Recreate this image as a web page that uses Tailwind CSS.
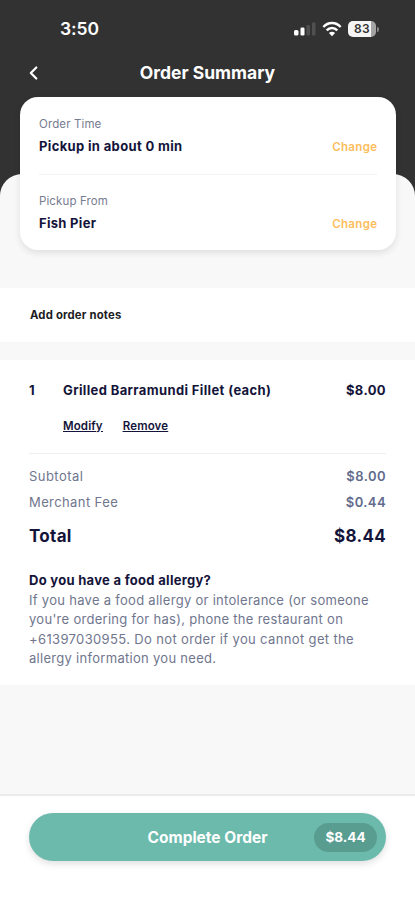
<!DOCTYPE html>
<html lang="en">
<head>
<meta charset="utf-8">
<meta name="viewport" content="width=device-width, initial-scale=1">
<title>Order Summary</title>
<script src="https://cdn.jsdelivr.net/npm/@tailwindcss/browser@4"></script>
</head>
<body class="bg-[#323232] font-['Inter',sans-serif] text-[#14143a]">
<div class="flex h-[900px] w-[415px] flex-col overflow-hidden">
  <header class="h-[174px] shrink-0 text-white">
    <div class="flex h-[58px] items-center justify-between pr-[36px] pl-[60px]">
      <span class="text-[17.500px] leading-none font-semibold tracking-[-0.1px]">3:50</span>
      <div class="flex items-center gap-[6px]">
        <svg class="h-[16px] w-[24px]" viewBox="0 0 24 16"><rect x="2" y="9" width="4.500" height="5.500" rx="1.500" fill="#fff"/><rect x="8.500" y="6.500" width="4" height="8" rx="1.300" fill="#fff"/><rect x="14.500" y="4" width="3.500" height="10.500" rx="1.300" fill="#505050"/><rect x="20" y="1.500" width="3.500" height="13" rx="1.300" fill="#505050"/></svg>
        <svg class="h-[16px] w-[20px]" viewBox="0 0 20 16" fill="none" stroke="#fff" stroke-width="2.500"><path d="M1.400 6C6 .7 14 .7 18.600 6"/><path d="M4.700 9.400C7.700 6.100 12.300 6.100 15.300 9.400"/><path d="M10 15.200 6.900 12.100Q10 9.300 13.100 12.100Z" fill="#fff" stroke="none"/></svg>
        <div class="flex items-center gap-px">
          <div class="flex h-[16px] w-[28px] items-center justify-center rounded-[5px] bg-linear-to-r from-[#f5f5f5] from-82% to-[#a3a3a3] to-82% text-[12px] leading-none font-semibold text-[#323232] tracking-[0.3px]">83</div>
          <div class="h-[5px] w-[2px] rounded-r-full bg-[#888]"></div>
        </div>
      </div>
    </div>
    <div class="grid h-[30px] grid-cols-[24px_1fr_24px] items-center px-[24px]">
      <svg class="h-[16px] w-[16px] translate-x-[2px]" viewBox="0 0 16 16" fill="none" stroke="#fff" stroke-width="2.200" stroke-linecap="round" stroke-linejoin="round"><path d="M10.300 2.500 4.800 8l5.500 5.500"/></svg>
      <h1 class="text-center text-[17.500px] leading-none font-bold">Order Summary</h1>
    </div>
  </header>

  <main class="grow rounded-t-[22px] bg-[#f8f8f8]">
    <section class="relative mx-[20px] -mt-[77px] h-[153px] w-[376px] rounded-[18px] bg-white px-[19px] shadow-[0_3px_7px_rgba(0,0,0,0.1)]">
      <div class="flex h-[77px] flex-col pt-[19px]">
        <p class="text-[11.500px] leading-[16px] tracking-[0.12px] text-[#777c92]">Order Time</p>
        <div class="mt-[4px] flex items-center justify-between leading-[20px]">
          <p class="text-[13px] font-bold tracking-[0.35px]">Pickup in about 0 min</p>
          <a class="-mr-[0.400px] translate-y-px text-[11.500px] font-semibold tracking-[0.35px] text-[#fcbd5c]">Change</a>
        </div>
      </div>
      <div class="flex flex-col border-t border-[#f2f2f2] pt-[18px]">
        <p class="text-[11.500px] leading-[16px] tracking-[0.12px] text-[#777c92]">Pickup From</p>
        <div class="mt-[4px] flex items-center justify-between leading-[20px]">
          <p class="text-[13px] font-bold tracking-[0.3px]">Fish Pier</p>
          <a class="-mr-[0.400px] translate-y-px text-[11.500px] font-semibold tracking-[0.35px] text-[#fcbd5c]">Change</a>
        </div>
      </div>
    </section>

    <section class="mt-[38px] flex h-[54px] items-center bg-white px-[30px] text-[11.300px] font-bold tracking-[0.2px] text-[#1c1c24]">Add order notes</section>

    <section class="mt-[18px] h-[325px] bg-white px-[29px] pt-[20px]">
      <div class="flex text-[13px] leading-[20px] font-bold tracking-[0.37px]">
        <span class="w-[34px]">1</span>
        <span class="grow">Grilled Barramundi Fillet (each)</span>
        <span>$8.00</span>
      </div>
      <div class="mt-[18px] flex gap-[20px] pl-[34px] text-[11.500px] leading-[16px] font-semibold tracking-[0.12px] underline underline-offset-1">
        <a>Modify</a><a>Remove</a>
      </div>
      <div class="mt-[19px] border-t border-[#efefef] pt-[12px]">
        <div class="flex justify-between text-[13px] leading-[20px] tracking-[0.45px] text-[#70768e]"><span>Subtotal</span><span class="font-semibold text-[#626b8c]">$8.00</span></div>
        <div class="mt-[6px] flex justify-between text-[13px] leading-[20px] tracking-[0.4px] text-[#70768e]"><span>Merchant Fee</span><span class="font-semibold text-[#626b8c]">$0.44</span></div>
        <div class="mt-[12px] flex justify-between text-[17px] leading-[24px] font-bold tracking-[0.3px]"><span>Total</span><span>$8.44</span></div>
      </div>
      <div class="mt-[23px] text-[13px] leading-[19.400px] tracking-[0.29px] text-[#70768e]">
        <h2 class="font-bold text-[#14143a]">Do you have a food allergy?</h2>
        <p class="mt-[0.500px]">If you have a food allergy or intolerance (or someone<br>you're ordering for has), phone the restaurant on<br><span class="tracking-[0.36px]">+61397030955. Do not order if you cannot get the</span><br>allergy information you need.</p>
      </div>
    </section>
  </main>

  <footer class="h-[106px] shrink-0 border-t-2 border-[#ebebeb] bg-white px-[29px] pt-[17px]">
    <button class="grid h-[48px] w-[357px] grid-cols-[72px_1fr_72px] items-center rounded-full bg-[#6bbaac] px-[9px] text-white shadow-[0_3px_7px_rgba(0,0,0,0.12)]">
      <span class="col-start-2 pt-[2px] text-[15.500px] leading-none font-bold">Complete Order</span>
      <span class="flex h-[29px] w-[63px] items-center justify-center justify-self-end rounded-full bg-[#599d91] pt-px text-[13.500px] leading-none font-bold">$8.44</span>
    </button>
  </footer>
</div>
</body>
</html>
